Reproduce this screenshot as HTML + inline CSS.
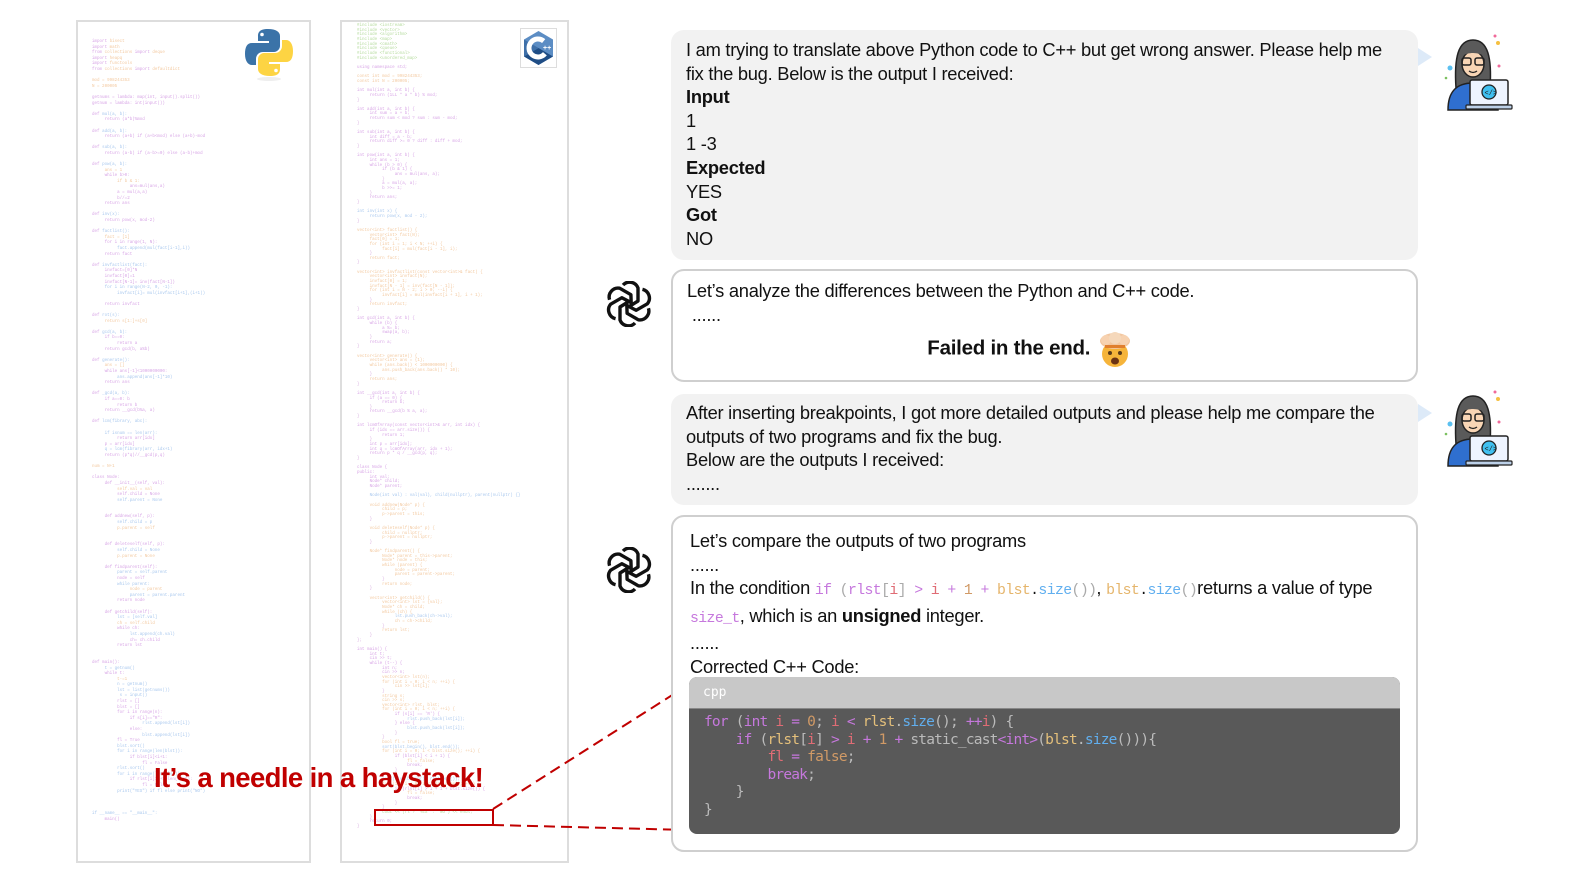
<!DOCTYPE html>
<html><head><meta charset="utf-8">
<style>
*{margin:0;padding:0;box-sizing:border-box}
html,body{width:1578px;height:888px;overflow:hidden}
body{background:#fff;position:relative;font-family:"Liberation Sans",sans-serif;color:#111}
.pane{position:absolute;border:2px solid #ddd;background:#fff;overflow:hidden}
pre{font-family:"Liberation Mono",monospace;font-size:4.2px;line-height:5.6px;color:#d9b0e0;position:absolute}
.k{color:#d8a6e6}.s{color:#f3c9a0}.f{color:#a9c8ee}.g{color:#b7dca0}
.b{position:absolute;left:671px;width:747px;border-radius:13px}
.u{background:#f2f2f2}
.a{background:#fff;border:2px solid #cfcfcf}
.t{font-size:18.3px;line-height:23.6px;letter-spacing:-0.25px;color:#111;white-space:nowrap}
.m{font-family:"Liberation Mono",monospace;font-size:14.8px;letter-spacing:-0.6px}
.tri{position:absolute;width:0;height:0;border-top:9px solid transparent;border-bottom:9px solid transparent;border-left:14px solid #ddeaf8}
</style></head><body>

<div class="pane" style="left:76px;top:20px;width:235px;height:843px">
<pre style="left:14px;top:18px"><span class="k">import</span> <span class="s">bisect</span>
<span class="k">import</span> <span class="s">math</span>
<span class="k">from</span> <span class="s">collections</span> <span class="k">import</span> <span class="s">deque</span>
<span class="k">import</span> <span class="s">heapq</span>
<span class="k">import</span> <span class="s">functools</span>
<span class="k">from</span> <span class="s">collections</span> <span class="k">import</span> <span class="s">defaultdict</span>

<span class="s">mod = 998244353</span>
<span class="s">N = 200005</span>

<span class="k">getnums = lambda: map(int, input().split())</span>
<span class="k">getnum = lambda: int(input())</span>

<span class="k">def</span> <span class="f">mul(a, b):</span>
     <span class="k">return (a*b)%mod</span>

<span class="k">def</span> <span class="f">add(a, b):</span>
     <span class="k">return (a+b) if (a+b&lt;mod) else (a+b)-mod</span>

<span class="k">def</span> <span class="f">sub(a, b):</span>
     <span class="k">return (a-b) if (a-b&gt;=0) else (a-b)+mod</span>

<span class="k">def</span> <span class="f">pow(a, b):</span>
     <span class="s">ans = 1</span>
     <span class="k">while b&gt;0:</span>
          <span class="s">if b &amp; 1:</span>
               <span class="k">ans=mul(ans,a)</span>
          <span class="k">a = mul(a,a)</span>
          <span class="k">b//=2</span>
     <span class="k">return ans</span>

<span class="k">def</span> <span class="f">inv(x):</span>
     <span class="k">return pow(x, mod-2)</span>

<span class="k">def</span> <span class="f">factlist():</span>
     <span class="s">fact = [1]</span>
     <span class="k">for i in range(1, N):</span>
          <span class="f">fact.append(mul(fact[i-1],i))</span>
     <span class="k">return fact</span>

<span class="k">def</span> <span class="f">invfactlist(fact):</span>
     <span class="k">invfact=[0]*N</span>
     <span class="k">invfact[0]=1</span>
     <span class="k">invfact[N-1]= inv(fact[N-1])</span>
     <span class="f">for i in range(N-2, 0, -1):</span>
          <span class="f">invfact[i]= mul(invfact[i+1],(i+1))</span>

     <span class="k">return invfact</span>

<span class="k">def</span> <span class="f">rot(s):</span>
     <span class="s">return s[1:]+s[0]</span>

<span class="k">def</span> <span class="f">gcd(a, b):</span>
     <span class="k">if b==0:</span>
          <span class="k">return a</span>
     <span class="k">return gcd(b, a%b)</span>

<span class="k">def</span> <span class="f">generate():</span>
     <span class="s">ans = []</span>
     <span class="k">while ans[-1]&lt;1000000000:</span>
          <span class="f">ans.append(ans[-1]*10)</span>
     <span class="k">return ans</span>

<span class="k">def</span> <span class="f">_gcd(a, b):</span>
     <span class="k">if a==0: b</span>
          <span class="k">return b</span>
     <span class="k">return __gcd(b%a, a)</span>

<span class="k">def</span> <span class="f">lcm(fibrary, abc):</span>

     <span class="f">if isnum == len(arr):</span>
          <span class="k">return arr[idx]</span>
     <span class="k">p = arr[idx]</span>
     <span class="f">q = lcm(fibrary(arr, idx+1)</span>
     <span class="k">return (p*q)//__gcd(p,q)</span>

<span class="s">num = N+1</span>

<span class="k">class Node:</span>
     <span class="k">def __init__(self, val):</span>
          <span class="s">self.val = val</span>
          <span class="k">self.child = None</span>
          <span class="f">self.parent = None</span>


     <span class="k">def addnew(self, p):</span>
          <span class="f">self.child = p</span>
          <span class="s">p.parent = self</span>


     <span class="k">def deleteself(self, p):</span>
          <span class="f">self.child = None</span>
          <span class="s">p.parent = None</span>

     <span class="k">def findparent(self):</span>
          <span class="f">parent = self.parent</span>
          <span class="k">node = self</span>
          <span class="f">while parent:</span>
               <span class="s">node = parent</span>
               <span class="f">parent = parent.parent</span>
          <span class="k">return node</span>

     <span class="k">def getchild(self):</span>
          <span class="f">lst = [self.val]</span>
          <span class="s">ch = self.child</span>
          <span class="k">while ch:</span>
               <span class="f">lst.append(ch.val)</span>
               <span class="k">ch= ch.child</span>
          <span class="k">return lst</span>


<span class="k">def main():</span>
     <span class="f">t = getnum()</span>
     <span class="k">while t:</span>
          <span class="s">t-=1</span>
          <span class="f">n = getnum()</span>
          <span class="f">lst = list(getnums())</span>
           <span class="f">s = input()</span>
          <span class="k">rlst = []</span>
          <span class="k">blst = []</span>
          <span class="k">for i in range(n):</span>
               <span class="k">if s[i]=="R":</span>
                    <span class="f">rlst.append(lst[i])</span>
               <span class="k">else:</span>
                    <span class="f">blst.append(lst[i])</span>
          <span class="k">fl = True</span>
          <span class="f">blst.sort()</span>
          <span class="f">for i in range(len(blst)):</span>
               <span class="k">if blst[i]&lt;i+1:</span>
                    <span class="k">fl = False</span>
          <span class="f">rlst.sort()</span>
          <span class="f">for i in range(len(rlst)):</span>
               <span class="k">if rlst[i]&gt;i+1+len(blst):</span>
                    <span class="k">fl = False</span>
          <span class="f">print("YES") if fl else print("NO")</span>



<span class="f">if __name__ == "__main__":</span>
     <span class="k">main()</span></pre>
</div>

<div class="pane" style="left:340px;top:20px;width:229px;height:843px">
<pre style="left:15px;top:2px;line-height:4.65px"><span class="g">#include &lt;iostream&gt;
#include &lt;vector&gt;
#include &lt;algorithm&gt;
#include &lt;map&gt;
#include &lt;cmath&gt;
#include &lt;queue&gt;
#include &lt;functional&gt;
#include &lt;unordered_map&gt;</span>

<span class="k">using namespace std;</span>

<span class="s">const int mod = 998244353;
const int N = 200005;</span>

<span class="k">int mul(int a, int b) {</span>
     <span class="k">return (1LL * a * b) % mod;</span>
}

<span class="k">int add(int a, int b) {</span>
     <span class="k">int sum = a + b;</span>
     <span class="k">return sum &lt; mod ? sum : sum - mod;</span>
}

<span class="k">int sub(int a, int b) {</span>
     <span class="k">int diff = a - b;</span>
     <span class="k">return diff &gt;= 0 ? diff : diff + mod;</span>
}

<span class="k">int pow(int a, int b) {</span>
     <span class="k">int ans = 1;</span>
     <span class="k">while (b &gt; 0) {</span>
          <span class="k">if (b &amp; 1) {</span>
               <span class="k">ans = mul(ans, a);</span>
          }
          <span class="k">a = mul(a, a);</span>
          <span class="k">b &gt;&gt;= 1;</span>
     }
     <span class="k">return ans;</span>
}

<span class="f">int inv(int x) {</span>
     <span class="f">return pow(x, mod - 2);</span>
}

<span class="s">vector&lt;int&gt; factlist() {</span>
     <span class="s">vector&lt;int&gt; fact(N);</span>
     <span class="s">fact[0] = 1;</span>
     <span class="s">for (int i = 1; i &lt; N; ++i) {</span>
          <span class="s">fact[i] = mul(fact[i - 1], i);</span>
     }
     <span class="s">return fact;</span>
}

<span class="s">vector&lt;int&gt; invfactlist(const vector&lt;int&gt;&amp; fact) {</span>
     <span class="s">vector&lt;int&gt; invfact(N);</span>
     <span class="s">invfact[0] = 1;</span>
     <span class="s">invfact[N - 1] = inv(fact[N - 1]);</span>
     <span class="s">for (int i = N - 2; i &gt; 0; --i) {</span>
          <span class="s">invfact[i] = mul(invfact[i + 1], i + 1);</span>
     }
     <span class="s">return invfact;</span>
}

<span class="k">int gcd(int a, int b) {</span>
     <span class="k">while (b) {</span>
          <span class="k">a %= b;</span>
          <span class="k">swap(a, b);</span>
     }
     <span class="k">return a;</span>
}

<span class="s">vector&lt;int&gt; generate() {</span>
     <span class="s">vector&lt;int&gt; ans = {1};</span>
     <span class="s">while (ans.back() &lt; 1000000000) {</span>
          <span class="s">ans.push_back(ans.back() * 10);</span>
     }
     <span class="s">return ans;</span>
}

<span class="k">int __gcd(int a, int b) {</span>
     <span class="k">if (a == 0) {</span>
          <span class="k">return b;</span>
     }
     <span class="k">return __gcd(b % a, a);</span>
}

<span class="k">int lcmOfArray(const vector&lt;int&gt;&amp; arr, int idx) {</span>
     <span class="k">if (idx == arr.size()) {</span>
          <span class="k">return 1;</span>
     }
     <span class="k">int p = arr[idx];</span>
     <span class="k">int q = lcmOfArray(arr, idx + 1);</span>
     <span class="k">return p * q / __gcd(p, q);</span>
}

<span class="k">class Node {</span>
<span class="k">public:</span>
     <span class="k">int val;</span>
     <span class="k">Node* child;</span>
     <span class="k">Node* parent;</span>

     <span class="f">Node(int val) : val(val), child(nullptr), parent(nullptr) {}</span>

     <span class="s">void addnew(Node* p) {</span>
          <span class="s">child = p;</span>
          <span class="s">p-&gt;parent = this;</span>
     }

     <span class="s">void deleteself(Node* p) {</span>
          <span class="s">child = nullptr;</span>
          <span class="s">p-&gt;parent = nullptr;</span>
     }

     <span class="s">Node* findparent() {</span>
          <span class="s">Node* parent = this-&gt;parent;</span>
          <span class="s">Node* node = this;</span>
          <span class="s">while (parent) {</span>
               <span class="s">node = parent;</span>
               <span class="s">parent = parent-&gt;parent;</span>
          }
          <span class="s">return node;</span>
     }

     <span class="s">vector&lt;int&gt; getchild() {</span>
          <span class="s">vector&lt;int&gt; lst = {val};</span>
          <span class="s">Node* ch = child;</span>
          <span class="s">while (ch) {</span>
               <span class="f">lst.push_back(ch-&gt;val);</span>
               <span class="s">ch = ch-&gt;child;</span>
          }
          <span class="s">return lst;</span>
     }
};

<span class="k">int main() {</span>
     <span class="k">int t;</span>
     <span class="k">cin &gt;&gt; t;</span>
     <span class="k">while (t--) {</span>
          <span class="k">int n;</span>
          <span class="k">cin &gt;&gt; n;</span>
          <span class="s">vector&lt;int&gt; lst(n);</span>
          <span class="s">for (int i = 0; i &lt; n; ++i) {</span>
               <span class="s">cin &gt;&gt; lst[i];</span>
          }
          <span class="s">string s;</span>
          <span class="s">cin &gt;&gt; s;</span>
          <span class="s">vector&lt;int&gt; rlst, blst;</span>
          <span class="s">for (int i = 0; i &lt; n; ++i) {</span>
               <span class="k">if (s[i] == 'R') {</span>
                    <span class="f">rlst.push_back(lst[i]);</span>
               <span class="k">} else {</span>
                    <span class="f">blst.push_back(lst[i]);</span>
               }
          }
          <span class="s">bool fl = true;</span>
          <span class="f">sort(blst.begin(), blst.end());</span>
          <span class="s">for (int i = 0; i &lt; blst.size(); ++i) {</span>
               <span class="k">if (blst[i] &lt; i + 1) {</span>
                    <span class="s">fl = false;</span>
                    <span class="k">break;</span>
               }
          }
          <span class="f">sort(rlst.begin(), rlst.end());</span>
          <span class="s">for (int i = 0; i &lt; rlst.size(); ++i) {</span>
               <span class="k">if (rlst[i] &gt; i + 1 + blst.size()) {</span>
                    <span class="s">fl = false;</span>
                    <span class="k">break;</span>
               }
          }
          <span class="g">cout &lt;&lt; (fl ? "YES" : "NO") &lt;&lt; endl;</span>
     }
     <span class="k">return 0;</span>
}</pre>
</div>

<!-- python logo -->
<svg style="position:absolute;left:244px;top:27px" width="50" height="56" viewBox="0 0 50 56">
<ellipse cx="25" cy="52" rx="12" ry="2" fill="#eee"/>
<path d="M24 2c-9 0-10 4-10 7v5h11v2H8c-5 0-7 4-7 11s3 11 7 11h4v-6c0-4 3-7 7-7h11c3 0 6-3 6-6V9c0-4-4-7-12-7z" fill="#3b73a8"/>
<circle cx="18" cy="7.5" r="1.8" fill="#fff"/>
<path d="M26 49c9 0 10-4 10-7v-5H25v-2h17c5 0 7-4 7-11s-3-11-7-11h-4v6c0 4-3 7-7 7H20c-3 0-6 3-6 6v10c0 4 4 7 12 7z" fill="#fdd443"/>
<circle cx="32" cy="43.5" r="1.8" fill="#fff"/>
</svg>
<!-- c++ logo -->
<div style="position:absolute;left:520px;top:28px;width:37px;height:40px;border:1px solid #ddd;background:#fff"></div>
<svg style="position:absolute;left:522px;top:30px" width="33" height="36" viewBox="0 0 33 36">
<polygon points="16.5,1 31,9.5 31,26.5 16.5,35 2,26.5 2,9.5" fill="#5c8dc4"/>
<polygon points="16.5,18 31,26.5 16.5,35 2,26.5" fill="#1f4d85"/>
<polygon points="2,9.5 16.5,18 2,26.5" fill="#3e6fa8"/>
<circle cx="16" cy="18" r="9" fill="none" stroke="#fff" stroke-width="5" stroke-dasharray="42 15" transform="rotate(40 16 18)"/>
<text x="21" y="20" font-size="7" fill="#fff" font-family="Liberation Sans" font-weight="bold">++</text>
</svg>

<div style="position:absolute;left:154px;top:762px;font-size:27.5px;font-weight:bold;color:#c00000;letter-spacing:-0.6px;white-space:nowrap">It’s a needle in a haystack!</div>
<div style="position:absolute;left:374px;top:809px;width:120px;height:17px;border:2px solid #c00000"></div>
<svg style="position:absolute;left:0;top:0" width="1578" height="888">
<line x1="493" y1="809" x2="688" y2="685" stroke="#c00000" stroke-width="2" stroke-dasharray="11 6"/>
<line x1="493" y1="825" x2="688" y2="830" stroke="#c00000" stroke-width="2" stroke-dasharray="11 6"/>
</svg>

<!-- bubble 1 -->
<div class="b u t" style="top:30px;height:230px;padding:8px 15px">
I am trying to translate above Python code to C++ but get wrong answer. Please help me<br>fix the bug. Below is the output I received:<br><b>Input</b><br>1<br>1 -3<br><b>Expected</b><br>YES<br><b>Got</b><br>NO</div>
<div class="tri" style="left:1418px;top:48px"></div>

<!-- bubble 2 -->
<div class="b a t" style="top:269px;height:113px;padding:8px 14px">
Let’s analyze the differences between the Python and C++ code.<br>&nbsp;......<br>
<div style="text-align:center;font-weight:bold;font-size:20.5px;margin-top:6px;padding-right:30px">Failed in the end. <span style="display:inline-block;width:36px;height:34px;vertical-align:middle;position:relative">
<svg width="38" height="36" viewBox="0 0 38 36"><circle cx="19" cy="22" r="13" fill="#f6b43a"/><ellipse cx="19" cy="9" rx="15" ry="8" fill="#f2c7a0"/><circle cx="10" cy="8" r="5" fill="#f7d2b0"/><circle cx="28" cy="8" r="5" fill="#f7d2b0"/><circle cx="19" cy="6" r="6" fill="#f5d8bb"/><rect x="9" y="13" width="20" height="3" fill="#e07f2e"/><circle cx="14" cy="21" r="2" fill="#5a3a1a"/><circle cx="24" cy="21" r="2" fill="#5a3a1a"/><ellipse cx="19" cy="29" rx="4" ry="3.5" fill="#6b3212"/></svg></span></div>
</div>

<!-- bubble 3 -->
<div class="b u t" style="top:394px;height:111px;padding:7px 15px">
After inserting breakpoints, I got more detailed outputs and please help me compare the<br>outputs of two programs and fix the bug.<br>Below are the outputs I received:<br>.......</div>
<div class="tri" style="left:1418px;top:404px"></div>

<!-- bubble 4 -->
<div class="b a t" style="top:515px;height:337px;padding:12px 17px">
Let’s compare the outputs of two programs<br>......<br>In the condition <span class="m"><span style="color:#c678dd">if</span> <span style="color:#aaa">(</span><span style="color:#c678dd">rlst</span><span style="color:#aaa">[</span><span style="color:#e06c75">i</span><span style="color:#aaa">]</span> <span style="color:#c678dd">&gt;</span> <span style="color:#e06c75">i</span> <span style="color:#c678dd">+</span> <span style="color:#d19a66">1</span> <span style="color:#c678dd">+</span> <span style="color:#e5b56b">blst</span>.<span style="color:#61afef">size</span><span style="color:#aaa">())</span></span>, <span class="m"><span style="color:#e5b56b">blst</span>.<span style="color:#61afef">size</span><span style="color:#aaa">()</span></span>returns a value of type<br><span class="m" style="color:#c678dd">size_t</span>, which is an <b>unsigned</b> integer.<br>......<br>Corrected C++ Code:
</div>

<div style="position:absolute;left:689px;top:677px;width:711px;height:157px;border-radius:8px;overflow:hidden;background:#595959">
<div style="height:32px;background:#c8c8c8;color:#fff;font-family:'DejaVu Sans Mono',monospace;font-size:13px;padding:8px 14px;border-bottom:1px solid #888">cpp</div>
<pre style="position:static;font-family:'DejaVu Sans Mono',monospace;font-size:14.5px;line-height:17.6px;color:#bbb;padding:5px 15px;letter-spacing:-0.8px"><span style="color:#c678dd">for</span> (<span style="color:#c678dd">int</span> <span style="color:#e06c75">i</span> <span style="color:#c678dd">=</span> <span style="color:#d19a66">0</span>; <span style="color:#e06c75">i</span> <span style="color:#c678dd">&lt;</span> <span style="color:#e5c07b">rlst</span>.<span style="color:#61afef">size</span>(); <span style="color:#c678dd">++</span><span style="color:#e06c75">i</span>) {
    <span style="color:#c678dd">if</span> (<span style="color:#e5c07b">rlst</span>[<span style="color:#e06c75">i</span>] <span style="color:#c678dd">&gt;</span> <span style="color:#e06c75">i</span> <span style="color:#c678dd">+</span> <span style="color:#d19a66">1</span> <span style="color:#c678dd">+</span> static_cast<span style="color:#c678dd">&lt;int&gt;</span>(<span style="color:#e5c07b">blst</span>.<span style="color:#61afef">size</span>())){
        <span style="color:#e06c75">fl</span> <span style="color:#c678dd">=</span> <span style="color:#d19a66">false</span>;
        <span style="color:#c678dd">break</span>;
    }
}</pre>
</div>

<!-- openai logos -->
<svg style="position:absolute;left:606px;top:281px" width="46" height="46" viewBox="-23 -23 46 46">
<g fill="none" stroke="#111" stroke-width="3.4" stroke-linejoin="round">
<g id="p"><path d="M-6 -19 a9 9 0 0 1 15 3 l0 13 l-8 5"/></g>
<use href="#p" transform="rotate(60)"/><use href="#p" transform="rotate(120)"/><use href="#p" transform="rotate(180)"/><use href="#p" transform="rotate(240)"/><use href="#p" transform="rotate(300)"/>
</g></svg>
<svg style="position:absolute;left:606px;top:547px" width="46" height="46" viewBox="-23 -23 46 46">
<g fill="none" stroke="#111" stroke-width="3.4" stroke-linejoin="round">
<g id="p2"><path d="M-6 -19 a9 9 0 0 1 15 3 l0 13 l-8 5"/></g>
<use href="#p2" transform="rotate(60)"/><use href="#p2" transform="rotate(120)"/><use href="#p2" transform="rotate(180)"/><use href="#p2" transform="rotate(240)"/><use href="#p2" transform="rotate(300)"/>
</g></svg>

<!-- avatars -->
<svg style="position:absolute;left:1440px;top:28px" width="75" height="85" viewBox="0 0 75 85">
<circle cx="55" cy="8" r="1.5" fill="#f06a9a"/><circle cx="58" cy="15" r="2" fill="#f5c040"/><circle cx="10" cy="40" r="2.5" fill="#5bc0f0"/><circle cx="6" cy="50" r="1.3" fill="#7bc060"/><circle cx="59" cy="38" r="1.5" fill="#f06a9a"/>
<path d="M16 60 C14 30 18 12 33 12 C48 12 52 30 50 60 Z" fill="#5a5a5a" stroke="#222" stroke-width="1.5"/>
<ellipse cx="33" cy="36" rx="11" ry="13" fill="#f8d5b5" stroke="#222" stroke-width="1.5"/>
<path d="M22 28 C25 18 42 18 45 28 C38 24 28 24 22 28Z" fill="#5a5a5a"/>
<rect x="22" y="30" width="9" height="7" rx="2" fill="none" stroke="#222" stroke-width="1.5"/><rect x="35" y="30" width="9" height="7" rx="2" fill="none" stroke="#222" stroke-width="1.5"/>
<path d="M29 43 q4 3 8 0" stroke="#222" fill="none" stroke-width="1.3"/>
<path d="M8 82 C8 62 18 55 33 55 C48 55 58 62 58 82 Z" fill="#2f6fcf" stroke="#222" stroke-width="1.5"/>
<rect x="30" y="52" width="38" height="25" rx="2" fill="#eef4ff" stroke="#222" stroke-width="1.5"/>
<circle cx="49" cy="64" r="7" fill="#40c0f0" stroke="#222" stroke-width="1.3"/>
<text x="44.5" y="67" font-size="7" font-family="Liberation Mono" fill="#222">&lt;/&gt;</text>
<rect x="26" y="77" width="46" height="4" rx="1" fill="#bcd0e8" stroke="#222" stroke-width="1.2"/>
</svg>
<svg style="position:absolute;left:1440px;top:384px" width="75" height="85" viewBox="0 0 75 85">
<circle cx="55" cy="8" r="1.5" fill="#f06a9a"/><circle cx="58" cy="15" r="2" fill="#f5c040"/><circle cx="10" cy="40" r="2.5" fill="#5bc0f0"/><circle cx="6" cy="50" r="1.3" fill="#7bc060"/><circle cx="59" cy="38" r="1.5" fill="#f06a9a"/>
<path d="M16 60 C14 30 18 12 33 12 C48 12 52 30 50 60 Z" fill="#5a5a5a" stroke="#222" stroke-width="1.5"/>
<ellipse cx="33" cy="36" rx="11" ry="13" fill="#f8d5b5" stroke="#222" stroke-width="1.5"/>
<path d="M22 28 C25 18 42 18 45 28 C38 24 28 24 22 28Z" fill="#5a5a5a"/>
<rect x="22" y="30" width="9" height="7" rx="2" fill="none" stroke="#222" stroke-width="1.5"/><rect x="35" y="30" width="9" height="7" rx="2" fill="none" stroke="#222" stroke-width="1.5"/>
<path d="M29 43 q4 3 8 0" stroke="#222" fill="none" stroke-width="1.3"/>
<path d="M8 82 C8 62 18 55 33 55 C48 55 58 62 58 82 Z" fill="#2f6fcf" stroke="#222" stroke-width="1.5"/>
<rect x="30" y="52" width="38" height="25" rx="2" fill="#eef4ff" stroke="#222" stroke-width="1.5"/>
<circle cx="49" cy="64" r="7" fill="#40c0f0" stroke="#222" stroke-width="1.3"/>
<text x="44.5" y="67" font-size="7" font-family="Liberation Mono" fill="#222">&lt;/&gt;</text>
<rect x="26" y="77" width="46" height="4" rx="1" fill="#bcd0e8" stroke="#222" stroke-width="1.2"/>
</svg>
</body></html>
